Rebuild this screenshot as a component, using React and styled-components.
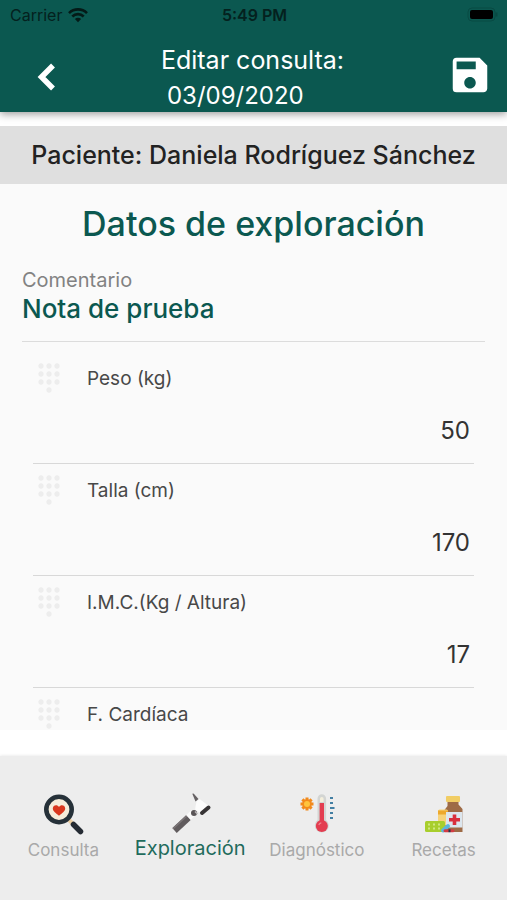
import React, { useState } from 'react';
import styled, { createGlobalStyle } from 'styled-components';
import { MdDialpad, MdSave } from 'react-icons/md';


const GlobalStyle = createGlobalStyle`
    * {
        box-sizing: border-box;
    }

    body {
        margin: 0;
        background: #ffffff;
        font-family: Inter, "Liberation Sans", sans-serif;
        color: #222222;
    }

    button, input {
        font-family: inherit;
    }
`

const Screen = styled.div`
    display: flex;
    flex-direction: column;
    height: 100vh;
`

const Header = styled.header`
    background: #0b5850;
    box-shadow: 0 2px 8px rgba(0, 0, 0, 0.4);
`

const StatusBar = styled.div`
    display: grid;
    grid-template-columns: 1fr auto 1fr;
    align-items: center;
    height: 30px;
    padding: 0 8px 0 10px;
    font-size: 16px;
    color: #04211e;
`

const Carrier = styled.span`
    display: flex;
    align-items: center;
    gap: 6px;
`

const Clock = styled.span`
    font-weight: 600;
`

const Battery = styled.svg`
    justify-self: end;
`

const Toolbar = styled.div`
    display: flex;
    align-items: center;
    justify-content: space-between;
    height: 82px;
    padding: 0 14px 0 24px;
`

const IconButton = styled.button`
    display: flex;
    padding: 8px 0 0;
    border: 0;
    background: none;
    color: #ffffff;
    cursor: pointer;
`

const HeaderTitle = styled.h1`
    margin: 0;
    padding: 14px 10px 0 0;
    font-size: 25px;
    font-weight: 400;
    line-height: 36px;
    color: #ffffff;
`

const HeaderDate = styled.span`
    display: block;
    padding-left: 6px;
    font-size: 24px;
`

const Content = styled.main`
    flex: 1;
    min-height: 0;
    margin: 14px 0 26px;
    overflow-y: auto;
    scrollbar-width: none;
    background: #fafafa;
`

const Patient = styled.p`
    margin: 0;
    background: #dfdfdf;
    font-size: 25px;
    font-weight: 500;
    line-height: 58px;
    text-align: center;
    white-space: nowrap;
`

const SectionTitle = styled.h2`
    margin: 16px 0 22px;
    font-size: 34px;
    font-weight: 500;
    line-height: 48px;
    text-align: center;
    color: #0b5850;
`

const Comment = styled.div`
    display: flex;
    flex-direction: column;
    height: 72px;
    margin: 0 22px 10px;
    border-bottom: 1px solid #dcdcdc;
`

const CommentLabel = styled.label`
    font-size: 20px;
    line-height: 20px;
    color: #828282;
`

const CommentInput = styled.input`
    width: 100%;
    height: 36px;
    padding: 0;
    border: 0;
    outline: 0;
    background: none;
    font-size: 26px;
    font-weight: 500;
    color: #0b5850;
`

const Row = styled.div`
    display: grid;
    grid-template-columns: 54px 1fr;
    grid-template-rows: 52px 59px;
    align-items: center;
    margin: 0 33px;
    border-bottom: 1px solid #d8d8d8;

    svg {
        color: #ededed;
    }
`

const RowLabel = styled.label`
    font-size: 19px;
    color: #484848;
`

const RowInput = styled.input`
    grid-column: 1 / -1;
    align-self: start;
    width: 100%;
    height: 52px;
    padding: 0 4px;
    border: 0;
    outline: 0;
    background: none;
    font-size: 24px;
    text-align: right;
    color: #333333;
`

const TabBar = styled.nav`
    display: grid;
    grid-template-columns: repeat(4, 1fr);
    height: 144px;
    padding-top: 36px;
    background: #ededed;
    box-shadow: 0 0 3px rgba(0, 0, 0, 0.12);
`

const Tab = styled.a`
    display: flex;
    flex-direction: column;
    align-items: center;
    gap: ${({$active}) => $active ? '0' : '2px'};
    font-size: ${({$active}) => $active ? '20px' : '17px'};
    line-height: 24px;
    text-decoration: none;
    color: ${({$active}) => $active ? '#1f6b5c' : '#a9a9a9'};
`

const BackIcon = () => (
    <svg width="44" height="44" viewBox="0 0 44 44" fill="none">
        <path d="M29 12.5 17.5 24 29 35.5" stroke="currentColor" strokeWidth="5.5" />
    </svg>
)

const WifiIcon = () => (
    <svg width="20" height="16" viewBox="0 0 20 16" fill="none" stroke="#041a17" strokeWidth="2.6">
        <path d="M1 6.1a12.8 12.8 0 0 1 18 0" />
        <path d="M4.3 9.5a8.1 8.1 0 0 1 11.4 0" />
        <path d="M10 15.2 6.9 12.1a4.4 4.4 0 0 1 6.2 0z" fill="#041a17" stroke="none" />
    </svg>
)

const ConsultaIcon = () => (
    <svg width="44" height="44" viewBox="0 0 44 44">
        <path d="M28 28l4 4" stroke="#eccfa4" strokeWidth="4" />
        <path d="M32.5 32.5 39.5 39.5" stroke="#252b33" strokeWidth="5.5" strokeLinecap="round" />
        <circle cx="18" cy="17.5" r="12.7" fill="#f6ecd9" stroke="#263139" strokeWidth="4.6" />
        <path d="M18 23.8c-3-2.4-6.2-4.6-6.2-7.2 0-3.6 4.4-4.5 6.2-1.7 1.8-2.8 6.2-1.9 6.2 1.7 0 2.6-3.2 4.8-6.2 7.2z" fill="#d9371d" />
    </svg>
)

const ExploracionIcon = () => (
    <svg width="44" height="44" viewBox="0 0 44 44">
        <path d="M6.5 38.5 20.5 25.5" stroke="#615c5e" strokeWidth="6.5" />
        <path d="M5 36.8 19 23.8" stroke="#7c7678" strokeWidth="1.5" />
        <path d="M20.5 25.5 26 20" stroke="#fafafa" strokeWidth="6.5" />
        <circle cx="26" cy="21" r="3" fill="#5a5557" />
        <path d="M27 19.5 29.5 22" stroke="#b9b6b7" strokeWidth="1.5" />
        <path d="M28.5 9.5 31.5 7 41.5 14.5 33 21.5 27 17.5z" fill="#fcfcfc" />
        <path d="M24.3 1.8Q25.500 1 26.500 2.500L30.5 7 27.5 9.5z" fill="#666264" />
        <path d="M34 21 40.5 15.5" stroke="#373435" strokeWidth="4" strokeLinecap="round" />
    </svg>
)

const DiagnosticoIcon = () => (
    <svg width="44" height="44" viewBox="0 0 44 44">
        <g stroke="#f28a1c" strokeWidth="3">
            <path d="M12 5.5v13M5.5 12h13M7.4 7.4l9.2 9.2M16.6 7.4l-9.2 9.2" />
        </g>
        <circle cx="12" cy="12" r="4.8" fill="#f28a1c" />
        <circle cx="12" cy="12" r="3" fill="#ffc43c" />
        <path d="M22.5 28V6.5a4.3 4.3 0 0 1 8.6 0V28a7 7 0 1 1-8.6 0z" fill="#d3d5d3" />
        <path d="M25 10V6.8a1.8 1.8 0 0 1 3.6 0V10z" fill="#f4efdc" />
        <path d="M24.6 11h4.4v18h-4.4z" fill="#e33d50" />
        <circle cx="26.8" cy="34" r="6" fill="#e33d50" />
        <path d="M23.8 33a3.2 3.2 0 0 1 2.5-2.2" stroke="#f18390" strokeWidth="1.3" fill="none" />
        <g stroke="#437fa3" strokeWidth="1.8">
            <path d="M35 6h3M35 11h3M35 16h4.5M35 21h3M35 26h3" />
        </g>
    </svg>
)

const RecetasIcon = () => (
    <svg width="44" height="44" viewBox="0 0 44 44">
        <path d="M25.5 8h11v4.5l4 4.5v23h-18V18l3-4z" fill="#9e6b46" />
        <rect x="24" y="4" width="14" height="6" rx="1" fill="#f1cd64" />
        <rect x="16" y="17.5" width="10" height="16" rx="1.5" fill="#f7d37a" />
        <rect x="16" y="18.5" width="10" height="4" fill="#eda92d" />
        <rect x="24" y="20" width="16.5" height="15.5" fill="#dce6ee" />
        <path d="M30.7 22.5h3.6v3.5h3.7v3.6h-3.7v3.5h-3.6v-3.5H27V26h3.7z" fill="#d92f3d" />
        <rect x="3" y="29" width="20" height="11" rx="1.5" fill="#a8ce2d" />
        <path d="M6 32.5h2M11 32.5h2M16 32.5h2M6 36.5h2M11 36.5h2M16 36.5h2" stroke="#cfe782" strokeWidth="2" />
        <path d="M21 38.5 26 34" stroke="#5db5dc" strokeWidth="4" strokeLinecap="round" />
        <path d="M23 38.8h3M29 38.8h2" stroke="#d43b43" strokeWidth="3" strokeLinecap="round" />
        <path d="M26.5 38.8h2" stroke="#25364b" strokeWidth="3" />
    </svg>
)

const fields = [
    { id: 'peso', label: 'Peso (kg)', value: '50' },
    { id: 'talla', label: 'Talla (cm)', value: '170' },
    { id: 'imc', label: 'I.M.C.(Kg / Altura)', value: '17' },
    { id: 'cardiaca', label: 'F. Cardíaca', value: '' },
]

const tabs = [
    { id: 'consulta', label: 'Consulta', Icon: ConsultaIcon },
    { id: 'exploracion', label: 'Exploración', Icon: ExploracionIcon },
    { id: 'diagnostico', label: 'Diagnóstico', Icon: DiagnosticoIcon },
    { id: 'recetas', label: 'Recetas', Icon: RecetasIcon },
]

const Field = ({ id, label, value }) => {
    const [current, setCurrent] = useState(value)

    return (
        <Row>
            <MdDialpad size={32} />
            <RowLabel htmlFor={id}>{label}</RowLabel>
            <RowInput
                id={id}
                inputMode="decimal"
                value={current}
                onChange={(e) => setCurrent(e.target.value)}
            />
        </Row>
    )
}

const App = () => {
    const [tab, setTab] = useState('exploracion')

    return (
        <Screen>
            <GlobalStyle />

            <Header>
                <StatusBar>
                    <Carrier>Carrier <WifiIcon /></Carrier>
                    <Clock>5:49 PM</Clock>
                    <Battery width="32" height="16" viewBox="0 0 32 16">
                        <rect x="1" y="1" width="27" height="13" rx="4" fill="none" stroke="#084a43" />
                        <rect x="3" y="3" width="23" height="9" rx="2" fill="#000000" />
                        <path d="M29.5 5.5v4" stroke="#084a43" strokeWidth="2" />
                    </Battery>
                </StatusBar>
                <Toolbar>
                    <IconButton type="button"><BackIcon /></IconButton>
                    <HeaderTitle>
                        Editar consulta:
                        <HeaderDate>03/09/2020</HeaderDate>
                    </HeaderTitle>
                    <IconButton type="button"><MdSave size={46} /></IconButton>
                </Toolbar>
            </Header>

            <Content>
                <Patient>Paciente: Daniela Rodríguez Sánchez</Patient>
                <SectionTitle>Datos de exploración</SectionTitle>
                <Comment>
                    <CommentLabel htmlFor="comentario">Comentario</CommentLabel>
                    <CommentInput id="comentario" defaultValue="Nota de prueba" />
                </Comment>
                {fields.map((field) => <Field key={field.id} {...field} />)}
            </Content>

            <TabBar>
                {tabs.map(({ id, label, Icon }) => (
                    <Tab key={id} href={`#${id}`} $active={tab === id} onClick={() => setTab(id)}>
                        <Icon />
                        {label}
                    </Tab>
                ))}
            </TabBar>
        </Screen>
    )
}

export default App
